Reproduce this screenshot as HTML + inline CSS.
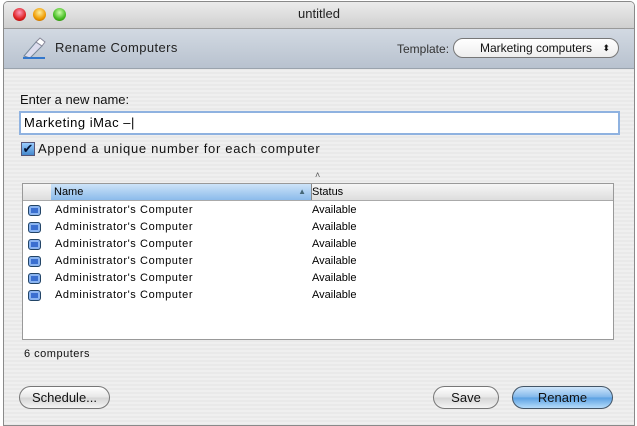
<!DOCTYPE html><html><head><style>
body{margin:0;width:637px;height:426px;background:#fff;font-family:"Liberation Sans",sans-serif;position:relative;overflow:hidden}
.a{position:absolute}
.win{left:3px;top:1px;width:630px;height:423px;border:1px solid #8a8a8a;border-radius:5px 5px 0 0;background:repeating-linear-gradient(#efefef 0 2px,#e9e9e9 2px 4px);overflow:hidden}
.title{left:0;top:0;width:630px;height:26px;background:linear-gradient(#ececec,#cfcfcf);border-bottom:1px solid #999;text-align:center;font-size:13px;line-height:24px;color:#222}
.tb{left:0;top:27px;width:630px;height:39px;background:linear-gradient(#d2d9e2,#b8c2cf);border-bottom:1px solid #9aa3ad}
.dot{width:13px;height:13px;border-radius:50%;top:6px}
.btn{border:1px solid #777;border-radius:12px;background:linear-gradient(#fff,#e6e6e6 50%,#d5d5d5 51%,#f4f4f4);font-size:13px;text-align:center;line-height:21px;height:21px;color:#111}
.row{font-size:11px;height:17px;line-height:17px}
.row .n{left:32px;letter-spacing:.6px}
.ic{left:5px;margin-top:3px;width:11px;height:9px;border-radius:3px;background:#3a6fd0;border:1px solid #246;box-shadow:inset 0 0 0 2px #8ab4f0}
</style></head><body>
<div class="a win">
<div class="a title">untitled</div>
<div class="a dot" style="left:9px;background:radial-gradient(circle at 50% 35%,#f9b,#d22 60%,#900)"></div>
<div class="a dot" style="left:29px;background:radial-gradient(circle at 50% 35%,#fe9,#e90 60%,#a50)"></div>
<div class="a dot" style="left:49px;background:radial-gradient(circle at 50% 35%,#cfa,#4b2 60%,#270)"></div>
<div class="a tb"></div>
<svg class="a" style="left:17px;top:34px" width="26" height="24"><path d="M3 20 L15 6 L21 10 L9 22 Z" fill="#dde" stroke="#789"/><path d="M15 6 L19 2 L24 6 L21 10Z" fill="#fff" stroke="#889"/><path d="M2 22 H24" stroke="#37c" stroke-width="2"/></svg>
<div class="a" style="left:51px;top:38px;font-size:13px;color:#222;letter-spacing:.4px">Rename Computers</div>
<div class="a" style="left:393px;top:40px;font-size:12px;color:#333">Template:</div>
<div class="a btn" style="left:449px;top:36px;width:164px;height:18px;line-height:18px;border-radius:10px;background:linear-gradient(#fff,#eee);font-size:12px">Marketing computers<span class="a" style="right:8px;top:0;font-size:9px">⬍</span></div>
<div class="a" style="left:16px;top:90px;font-size:13px;color:#111">Enter a new name:</div>
<div class="a" style="left:15px;top:109px;width:594px;height:20px;border:2px solid #8fb2e0;background:#fff;font-size:13px;line-height:20px;padding-left:3px;letter-spacing:.5px">Marketing iMac –|</div>
<div class="a" style="left:17px;top:140px;width:12px;height:12px;border:1px solid #557;background:linear-gradient(#9cf,#48c);color:#013;font-size:13px;line-height:11px;text-align:center">✔</div>
<div class="a" style="left:34px;top:139px;font-size:13px;color:#111;letter-spacing:.7px">Append a unique number for each computer</div>
<div class="a" style="left:311px;top:168px;font-size:9px;color:#555">˄</div>
<div class="a" style="left:18px;top:181px;width:590px;height:155px;border:1px solid #999;background:#fff">
<div class="a" style="left:0;top:0;width:590px;height:16px;background:linear-gradient(#f6f6f6,#ddd);border-bottom:1px solid #aaa"></div>
<div class="a" style="left:28px;top:0;width:257px;height:16px;background:linear-gradient(#cde3f8,#8cbbeb);font-size:11px;line-height:16px;padding-left:3px;border-right:1px solid #888">Name<span class="a" style="right:5px;top:0;font-size:8px;color:#467">▲</span></div>
<div class="a" style="left:289px;top:0;font-size:11px;line-height:16px">Status</div>
<div class="a" style="left:0;top:18px;width:590px">
<div class="row"><span class="a ic"></span><span class="a n">Administrator's Computer</span><span class="a" style="left:289px">Available</span>&nbsp;</div>
<div class="row"><span class="a ic"></span><span class="a n">Administrator's Computer</span><span class="a" style="left:289px">Available</span>&nbsp;</div>
<div class="row"><span class="a ic"></span><span class="a n">Administrator's Computer</span><span class="a" style="left:289px">Available</span>&nbsp;</div>
<div class="row"><span class="a ic"></span><span class="a n">Administrator's Computer</span><span class="a" style="left:289px">Available</span>&nbsp;</div>
<div class="row"><span class="a ic"></span><span class="a n">Administrator's Computer</span><span class="a" style="left:289px">Available</span>&nbsp;</div>
<div class="row"><span class="a ic"></span><span class="a n">Administrator's Computer</span><span class="a" style="left:289px">Available</span>&nbsp;</div>
</div></div>
<div class="a" style="left:20px;top:346px;font-size:11px;color:#111;letter-spacing:.5px">6 computers</div>
<div class="a btn" style="left:15px;top:384px;width:89px">Schedule...</div>
<div class="a btn" style="left:429px;top:384px;width:64px">Save</div>
<div class="a btn" style="left:508px;top:384px;width:99px;border-color:#456;background:linear-gradient(#cfe6fb,#7fb6ea 50%,#5aa0e2 51%,#b5dcfb)">Rename</div>
</div>
</body></html>
